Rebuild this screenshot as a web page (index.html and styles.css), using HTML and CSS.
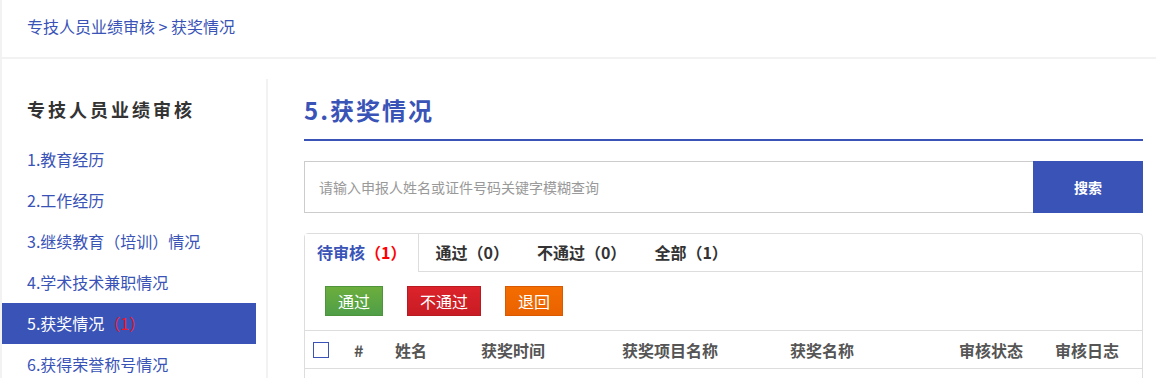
FILE: index.html
```html
<!DOCTYPE html>
<html lang="zh-CN">

<head>
    <meta charset="UTF-8" />
    <meta name="viewport" content="width=device-width, initial-scale=1.0" />
    <title>获奖情况</title>
    <link rel="stylesheet" href="styles.css">
</head>

<body>
    <div class="breadcrumb">
        <a href="#">专技人员业绩审核</a> &gt; <a href="#">获奖情况</a>
    </div>

    <div class="page">
        <!-- 左侧菜单 -->
        <div class="sidebar">
            <h2>专技人员业绩审核</h2>
            <ul class="menu">
                <li><a href="#">1.教育经历</a></li>
                <li><a href="#">2.工作经历</a></li>
                <li><a href="#">3.继续教育（培训）情况</a></li>
                <li><a href="#">4.学术技术兼职情况</a></li>
                <li class="active"><a href="#">5.获奖情况<span class="count">（1）</span></a></li>
                <li><a href="#">6.获得荣誉称号情况</a></li>
            </ul>
        </div>

        <!-- 内容区 -->
        <div class="content">
            <h1 class="title">5.获奖情况</h1>

            <div class="search">
                <input type="text" placeholder="请输入申报人姓名或证件号码关键字模糊查询" />
                <button type="button">搜索</button>
            </div>

            <div class="panel">
                <ul class="tabs">
                    <li class="active">待审核<span class="count">（1）</span></li>
                    <li>通过（0）</li>
                    <li>不通过（0）</li>
                    <li>全部（1）</li>
                </ul>

                <div class="actions">
                    <button type="button" class="btn btn-pass">通过</button>
                    <button type="button" class="btn btn-reject">不通过</button>
                    <button type="button" class="btn btn-return">退回</button>
                </div>

                <table class="list">
                    <colgroup>
                        <col style="width: 41px">
                        <col style="width: 41px">
                        <col style="width: 86px">
                        <col style="width: 141px">
                        <col style="width: 168px">
                        <col style="width: 169px">
                        <col style="width: 96px">
                        <col>
                    </colgroup>
                    <thead>
                        <tr>
                            <th><input type="checkbox" class="check" /></th>
                            <th>#</th>
                            <th>姓名</th>
                            <th>获奖时间</th>
                            <th>获奖项目名称</th>
                            <th>获奖名称</th>
                            <th>审核状态</th>
                            <th>审核日志</th>
                        </tr>
                    </thead>
                    <tbody>
                        <tr>
                            <td></td>
                            <td></td>
                            <td></td>
                            <td></td>
                            <td></td>
                            <td></td>
                            <td></td>
                            <td></td>
                        </tr>
                    </tbody>
                </table>
            </div>
        </div>
    </div>
</body>

</html>
```

FILE: styles.css
```css
* {
    box-sizing: border-box;
}

body {
    margin: 0;
    padding-left: 2px;
    background-color: #f2f2f2;
    font-family: "Noto Sans CJK SC", sans-serif;
    color: #333;
}

a {
    color: inherit;
    text-decoration: none;
}

.breadcrumb {
    height: 57px;
    margin-bottom: 2px;
    padding: 16px 25px 0;
    background-color: #fff;
    font-size: 16px;
    line-height: 20px;
    color: #3953b7;
}

.page {
    display: flex;
    min-height: 420px;
    background-color: #fff;
}

/* 左侧菜单 */
.sidebar {
    width: 266px;
    margin-top: 20px;
    padding-top: 10px;
    border-right: 2px solid #f2f2f2;
}

.sidebar h2 {
    margin: 0 0 10px;
    padding-left: 25px;
    font-size: 18px;
    line-height: 40px;
    letter-spacing: 3px;
    color: #333;
}

.menu {
    list-style: none;
    margin: 0;
    padding: 0;
}

.menu li {
    width: 254px;
    height: 41px;
    padding-left: 25px;
    font-size: 16px;
    line-height: 41px;
    color: #3953b7;
}

.menu li.active {
    background-color: #3953b7;
    color: #fff;
}

.menu .count {
    color: #f0182a;
}

/* 内容区 */
.content {
    flex: 1;
    padding: 31px 13px 0 36px;
}

.title {
    height: 51px;
    margin: 0;
    border-bottom: 2px solid #3953b7;
    font-size: 24px;
    line-height: 40px;
    letter-spacing: 2px;
    color: #3953b7;
}

.search {
    display: flex;
    height: 52px;
    margin-top: 20px;
}

.search input {
    flex: 1;
    padding: 0 14px;
    border: 1px solid #ccc;
    border-right: none;
    outline: none;
    font-family: inherit;
    font-size: 14px;
    color: #333;
}

.search input::placeholder {
    color: #999;
}

.search button {
    width: 110px;
    border: 0;
    background-color: #3953b7;
    color: #fff;
    font-family: inherit;
    font-size: 14px;
    font-weight: bold;
}

.panel {
    margin-top: 20px;
    border: 1px solid #ddd;
    border-radius: 4px;
}

.tabs {
    display: flex;
    height: 38px;
    margin: 0;
    padding: 0;
    list-style: none;
    border-bottom: 1px solid #ddd;
}

.tabs li {
    padding: 0 12px 0 16px;
    font-size: 16px;
    font-weight: bold;
    line-height: 37px;
    color: #333;
}

.tabs li.active {
    height: 38px;
    padding-left: 12px;
    border-right: 1px solid #ddd;
    background-color: #fff;
    color: #3953b7;
}

.tabs .count {
    color: #ff0000;
}

.actions {
    display: flex;
    gap: 24px;
    padding: 14px 20px;
}

.btn {
    height: 30px;
    padding: 0 12px;
    border: 1px solid;
    font-family: inherit;
    font-size: 16px;
    line-height: 26px;
    color: #fff;
}

.btn-pass {
    background: linear-gradient(#6cae3d, #4f9e48);
    border-color: #4d943c;
}

.btn-reject {
    background: linear-gradient(#dc232b, #c81c24);
    border-color: #b81a21;
}

.btn-return {
    background: linear-gradient(#f46d00, #ea6200);
    border-color: #d85a00;
}

.list {
    width: 100%;
    border-collapse: collapse;
    table-layout: fixed;
}

.list th,
.list td {
    padding: 0 8px;
    border-top: 1px solid #ddd;
    border-bottom: 1px solid #ddd;
    text-align: left;
}

.list th {
    height: 38px;
    font-size: 16px;
    color: #555;
}

.list td {
    height: 40px;
}

.check {
    appearance: none;
    display: block;
    width: 16px;
    height: 16px;
    margin: 0;
    border: 1px solid #3953b7;
    background-color: #fff;
}
```
